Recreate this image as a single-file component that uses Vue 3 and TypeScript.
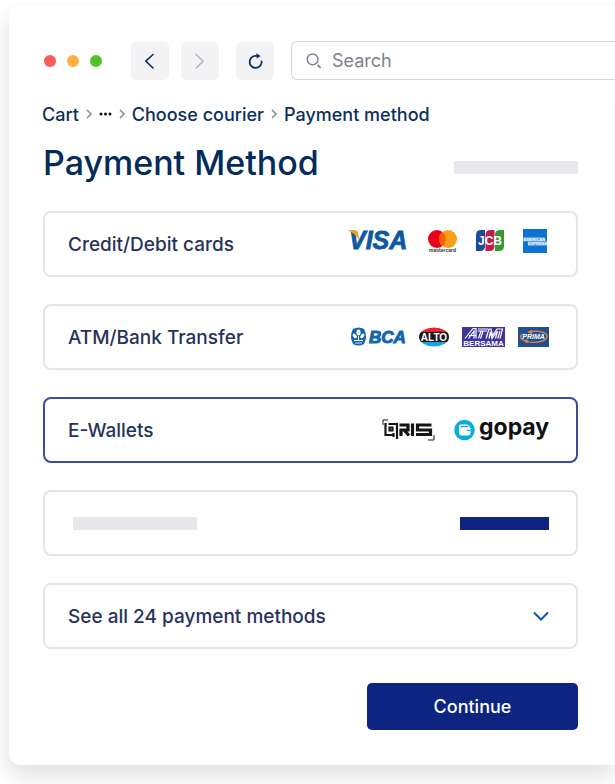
<script setup lang="ts">
import { ref } from 'vue'

interface Method {
  id: string
  label: string
}

const methods: Method[] = [
  { id: 'card', label: 'Credit/Debit cards' },
  { id: 'bank', label: 'ATM/Bank Transfer' },
  { id: 'wallet', label: 'E-Wallets' },
]

const selected = ref<string>('wallet')
const query = ref<string>('')
</script>

<template>
  <div class="browser">
    <header class="toolbar">
      <div class="lights">
        <span class="light red"></span>
        <span class="light amber"></span>
        <span class="light green"></span>
      </div>
      <button class="tool back" type="button" aria-label="Back">
        <svg width="38" height="38" viewBox="0 0 38 38"><path d="M22 12.5 14.8 19.2 22 26" fill="none" stroke="#0b2f5c" stroke-width="1.6" stroke-linecap="round" stroke-linejoin="round" /></svg>
      </button>
      <button class="tool forward" type="button" aria-label="Forward">
        <svg width="38" height="38" viewBox="0 0 38 38"><path d="M15 12.5 22.2 19.2 15 26" fill="none" stroke="#b3b3c6" stroke-width="1.5" stroke-linecap="round" stroke-linejoin="round" /></svg>
      </button>
      <button class="tool reload" type="button" aria-label="Reload">
        <svg width="38" height="38" viewBox="0 0 38 38">
          <path d="M21 13.9H19.8A6 6 0 1 0 25.6 19.4" fill="none" stroke="#0b2f5c" stroke-width="1.8" stroke-linecap="round" />
          <path d="M20.3 11.3 24.6 13.9 20.8 16.6Z" fill="#0b2f5c" />
        </svg>
      </button>
      <label class="search">
        <svg width="16" height="16" viewBox="0 0 16 16"><circle cx="6.6" cy="6.4" r="5.4" fill="none" stroke="#7d828d" stroke-width="1.4" /><path d="M11.6 11.8 14.6 14.8" stroke="#7d828d" stroke-width="1.8" /></svg>
        <input v-model="query" type="text" placeholder="Search" aria-label="Search" />
      </label>
    </header>

    <main class="page">
      <nav class="crumbs" aria-label="Breadcrumb">
        <a href="#cart">Cart</a>
        <svg class="sep" width="6" height="10" viewBox="0 0 6 10"><path d="M1 1 5 5 1 9" /></svg>
        <a class="more" href="#more" aria-label="More">
          <svg width="13" height="4" viewBox="0 0 13 4"><circle cx="2" cy="2" r="1.5" /><circle cx="6.5" cy="2" r="1.5" /><circle cx="11" cy="2" r="1.5" /></svg>
        </a>
        <svg class="sep" width="6" height="10" viewBox="0 0 6 10"><path d="M1 1 5 5 1 9" /></svg>
        <a href="#courier">Choose courier</a>
        <svg class="sep" width="6" height="10" viewBox="0 0 6 10"><path d="M1 1 5 5 1 9" /></svg>
        <a href="#payment" aria-current="page">Payment method</a>
      </nav>

      <div class="heading">
        <h1>Payment Method</h1>
        <span class="bar grey"></span>
      </div>

      <div class="options">
        <label v-for="m in methods" :key="m.id" class="option" :class="{ active: selected === m.id }">
          <input v-model="selected" type="radio" name="method" :value="m.id" />
          <span>{{ m.label }}</span>

          <span v-if="m.id === 'card'" class="logos cards">
            <svg width="62" height="24" viewBox="0 0 62 24" role="img">
              <text class="visa" x="2" y="20">VISA</text>
              <path d="M0 1.200H7.800C9.800 1.200 10.800 2 11.100 3.800L12.500 12C9.500 6 5.500 3 0 1.200Z" fill="#f5a31f" />
            </svg>
            <svg width="29" height="24" viewBox="0 0 29 24" role="img">
              <circle cx="9" cy="10" r="9" fill="#eb001b" />
              <circle cx="20" cy="10" r="9" fill="#f79e1b" />
              <path d="M14.500 2.900A9 9 0 0 1 14.500 17.100 9 9 0 0 1 14.500 2.900Z" fill="#ff5f00" />
              <text class="mc" x="14.500" y="22.500">mastercard</text>
            </svg>
            <svg width="28" height="24" viewBox="0 0 28 24" role="img">
              <path d="M5 1H9V17Q9 22 4 22H0V6Q0 1 5 1Z" fill="#174c9e" />
              <path d="M14.500 1H18.500V17Q18.500 22 13.500 22H9.500V6Q9.500 1 14.500 1Z" fill="#c71942" />
              <path d="M24 1H28V17Q28 22 23 22H19V6Q19 1 24 1Z" fill="#319b34" />
              <text class="jcb" x="14" y="15.500">JCB</text>
            </svg>
            <svg width="24" height="24" viewBox="0 0 24 24" role="img">
              <path d="M0 0H24V24H0Z" fill="#0f72d2" />
              <path d="M0 8H22V12H24V17H5V12.500H0Z" fill="#5c9fe0" />
              <text class="amex" x="0.500" y="12">AMERICAN</text>
              <text class="amex" x="5" y="16.400">EXPRESS</text>
            </svg>
          </span>

          <span v-else-if="m.id === 'bank'" class="logos">
            <svg width="56" height="22" viewBox="0 0 56 22" role="img">
              <path d="M3 3Q8.500 0 14 3 18 10.500 14 18 8.500 21 3 18-1 10.500 3 3Z" fill="#0f66ae" />
              <g fill="#fff">
                <ellipse cx="8.500" cy="6.500" rx="2.100" ry="3" />
                <ellipse cx="4.700" cy="10" rx="1.600" ry="2.700" transform="rotate(-40 4.700 10)" />
                <ellipse cx="12.300" cy="10" rx="1.600" ry="2.700" transform="rotate(40 12.300 10)" />
                <path d="M8 10H9V14H13V15H4V14H8Z" />
                <path d="M5 16.600H12V17.400H5Z" />
              </g>
              <text class="bca" x="19" y="17">BCA</text>
            </svg>
            <svg width="30" height="22" viewBox="0 0 30 22" role="img">
              <clipPath id="alto"><ellipse cx="15" cy="11" rx="15" ry="9.500" /></clipPath>
              <g clip-path="url(#alto)">
                <path d="M0 0H30V8H0Z" fill="#e5252b" />
                <path d="M0 15H30V22H0Z" fill="#18a5df" />
                <path d="M0 6H30V16H0Z" fill="#181818" />
              </g>
              <text class="alto" x="15" y="14.500">ALTO</text>
            </svg>
            <svg width="43" height="22" viewBox="0 0 43 22" role="img">
              <path d="M0 1H43V21H0Z" fill="#3d359b" />
              <path d="M3 12.500 11 2.500H14V12.500M6.500 12.500 12 5V12.500M7 9.500H14M16 3H26M15.500 5H25M21 5 18.500 12.500M19 5 16.500 12.500M24 12.500 27 3H29L30.500 9.500 35 3H40.500L38 12.500M27 12.500 28.500 6 30 12.500 35.500 5 33.500 12.500M35.800 12.500 38 5" fill="none" stroke="#fff" stroke-width="1.200" />
              <text class="bersama" x="21.500" y="19.800">BERSAMA</text>
            </svg>
            <svg width="31" height="22" viewBox="0 0 31 22" role="img">
              <path d="M0 1H31V21H0Z" fill="#224e93" />
              <path d="M9 15.500C3 14 0 10 5 8M12 5.700C21 3.700 30 7 29 11 28 15 20 17 12 16.300" fill="none" stroke="#e58a35" stroke-width="1.300" />
              <path d="M14 3.800 9.500 6 14 8ZM8 13 12 16.300 7.500 17Z" fill="#e58a35" />
              <text class="prima" x="15.500" y="13.200">PRIMA</text>
            </svg>
          </span>

          <span v-else class="logos wallets">
            <svg width="53" height="22" viewBox="0 0 53 22" role="img">
              <g fill="none" stroke="#151515">
                <path d="M1 6V1H6M52 16V21H46" stroke-width="1" />
                <path d="M3.500 4V16H11M6.500 5H15V20M10.500 8.500V11.500H7.500V8.500ZM11.500 14V18" stroke-width="2.200" />
                <path d="M19 17V11H26V6H17.500M22 11 27 16.500M30.500 4.500V17M49.500 6H35.500V11H48.500V15.500H34" stroke-width="3.200" />
              </g>
            </svg>
            <svg width="95" height="26" viewBox="0 0 95 26" role="img">
              <circle cx="10.500" cy="13" r="10.300" fill="#08aedb" />
              <path d="M7 7.500H12.500Q15 7.500 15 9.500 16.500 10 16.500 11.500V16Q16.500 18.500 14 18.500H7.500Q5 18.500 5 16V9.500Q5 7.500 7 7.500Z" fill="#fff" />
              <path d="M6.500 9.700H14M12.500 13.500H16.500" fill="none" stroke="#08aedb" stroke-width="1.200" />
              <text class="gopay" x="25" y="18">gopay</text>
            </svg>
          </span>
        </label>

        <div class="option blank">
          <span class="bar grey"></span>
          <span class="bar navy"></span>
        </div>

        <button class="option expand" type="button">
          <span>See all 24 payment methods</span>
          <svg width="16" height="10" viewBox="0 0 16 10"><path d="M1 1.500 8 8.500 15 1.500" fill="none" stroke="#0f52c4" stroke-width="2" /></svg>
        </button>
      </div>

      <button class="continue" type="button">Continue</button>
    </main>
  </div>
</template>

<style>
body {
  margin: 0;
  background: #fff;
  overflow-x: hidden;
}
</style>

<style scoped>
* {
  box-sizing: border-box;
}

.browser {
  margin: 6px 0 20px 9px;
  padding-top: 35px;
  border-radius: 11px 0 0 11px;
  background: #fff;
  box-shadow: 0 10px 22px rgba(0, 0, 0, 0.13);
  font-family: Inter, "Open Sans", sans-serif;
  font-size: 18px;
  font-weight: 500;
}

button,
input {
  font: inherit;
}

svg {
  display: block;
  flex: none;
  overflow: visible;
}

.toolbar {
  display: flex;
  align-items: center;
  padding-left: 35px;
}

.lights {
  display: flex;
  gap: 11px;
  margin-right: 29px;
}

.light {
  width: 12px;
  height: 12px;
  border-radius: 50%;
}

.red { background: #ff5b54; }
.amber { background: #ffb13d; }
.green { background: #51c22b; }

.tool {
  width: 38px;
  height: 38px;
  padding: 0;
  border: 0;
  border-radius: 5px;
  background: #f3f3f6;
}

.back { margin-right: 12px; }
.forward { margin-right: 17px; }
.reload { margin-right: 17px; }

.search {
  display: flex;
  flex: 1;
  align-items: center;
  gap: 10px;
  height: 39px;
  padding-left: 14px;
  border: 1px solid #d6d6d8;
  border-right: 0;
  border-radius: 6px 0 0 6px;
}

.search input {
  flex: 1;
  min-width: 0;
  padding: 0;
  border: 0;
  outline: 0;
  background: none;
  font-weight: 400;
  color: #7d828d;
}

.search input::placeholder {
  color: #7d828d;
  opacity: 1;
}

.page {
  display: flex;
  flex-direction: column;
  margin-top: 23px;
  padding: 0 35px 35px 34px;
  border-right: 2px solid #fafafa;
}

.crumbs {
  display: flex;
  align-items: center;
  gap: 7px;
  height: 22px;
  margin-left: -1px;
  white-space: nowrap;
}

.crumbs a {
  color: #0b2f5c;
  text-decoration: none;
}

.sep {
  fill: none;
  stroke: #858a94;
  stroke-width: 1.5;
}

.more {
  fill: #111;
}

.heading {
  display: flex;
  align-items: center;
  justify-content: space-between;
  height: 40px;
  margin: 18px 0 28px;
}

h1 {
  margin: 0;
  color: #032b5b;
  font-size: 34px;
  font-weight: 500;
  line-height: 40px;
  white-space: nowrap;
}

.bar {
  height: 13px;
}

.grey {
  width: 124px;
  background: #e6e8ec;
}

.navy {
  width: 89px;
  background: #0d2480;
}

.heading .bar {
  margin-top: 8px;
}

.options {
  display: flex;
  flex-direction: column;
  gap: 27px;
}

.option {
  position: relative;
  display: flex;
  align-items: center;
  justify-content: space-between;
  height: 66px;
  padding: 0 27px 0 23px;
  border: 2px solid #e5e5e6;
  border-radius: 8px;
  background: #fff;
  color: #27335b;
  font-size: 19px;
  text-align: left;
  white-space: nowrap;
}

.option input {
  position: absolute;
  inset: 0;
  margin: 0;
  opacity: 0;
}

.active {
  border-color: #3c4b9b;
}

.blank {
  padding-left: 28px;
}

.logos {
  display: flex;
  align-items: center;
  gap: 13px;
}

.cards {
  gap: 19px;
  padding: 0 2px 6px 0;
}

.wallets {
  gap: 19px;
}

.continue {
  align-self: flex-end;
  width: 211px;
  height: 47px;
  margin-top: 34px;
  border: 0;
  border-radius: 5px;
  background: #0d2480;
  color: #fff;
}

text {
  font-family: "Liberation Sans", sans-serif;
  font-weight: 700;
}

.visa {
  font-size: 25px;
  font-style: italic;
  fill: #0c58a3;
  stroke: #0c58a3;
  stroke-width: 0.8px;
}

.mc {
  font-size: 5px;
  text-anchor: middle;
  fill: #333;
}

.jcb {
  font-size: 12px;
  text-anchor: middle;
  fill: #fff;
}

.amex {
  font-size: 4px;
  fill: #fff;
}

.bca {
  font-size: 17px;
  font-style: italic;
  fill: #0f66ae;
  stroke: #0f66ae;
  stroke-width: 1px;
}

.alto {
  font-size: 10px;
  text-anchor: middle;
  fill: #fff;
}

.bersama {
  font-size: 8px;
  text-anchor: middle;
  fill: #fff;
}

.prima {
  font-size: 7px;
  font-style: italic;
  text-anchor: middle;
  fill: #fff;
}

.gopay {
  font-family: Inter, sans-serif;
  font-size: 23px;
  fill: #111;
}
</style>
